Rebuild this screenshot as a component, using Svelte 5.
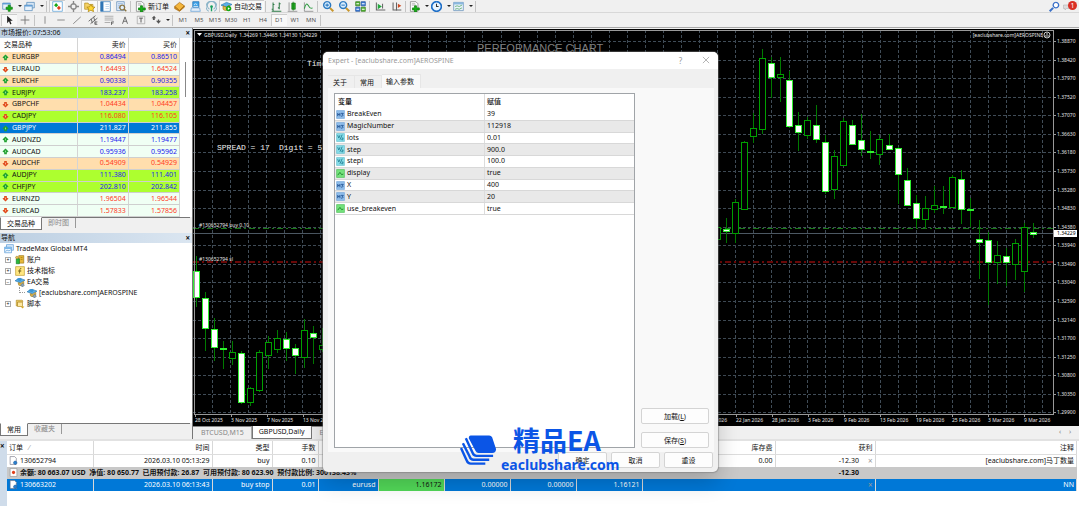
<script>
	// every icon is a list of shapes on a 16x16 grid: [path, fill, stroke, stroke width]
	const icons = {
		newchart: [
			["M1 3h11v9H1z", "#e8f2fb", "#4f86b8", 1],
			["M1 3h11v2H1z", "#5b9bd5"],
			["M9 6h3v3h3v3h-3v3H9v-3H6V9h3z", "#16b016", "#0b7a0b", 1],
		],
		profiles: [
			["M4 2h11v8H4z", "#d6e6f5", "#4f86b8", 1],
			["M1 6h11v8H1z", "#e8f2fb", "#4f86b8", 1],
			["M1 6h11v2H1z", "#5b9bd5"],
		],
		market: [
			["M1 1h14v14H1z", "#fff", "#4f9bd5", 1],
			["M3 6l3-3 3 3-3 3z", "#18a818"],
			["M7 10l3-3 3 3-3 3z", "#e0401c"],
		],
		target: [
			["M8 4a4 4 0 1 0 .1 0", "none", "#888", 2],
			["M8 0v5M8 11v5M0 8h5M11 8h5", "none", "#888", 2],
		],
		folder: [
			["M1 3h5l1 2h6v7H1z", "#f6d266", "#b08a1c", 1],
			["M10 5l2 3.500 4 .5-3 2.500 1 4-4-2-4 2 1-4-3-2.500 4-.5z", "#ffd633", "#a8800c", 1],
		],
		navigator: [
			["M1 1h14v14H1z", "#fff", "#2f75b5", 1],
			["M1 1h4v14H1z", "#2f75b5"],
			["M8 5h5M8 8h5M8 11h5", "none", "#a8c6e4", 1],
		],
		tester: [
			["M1 1h11v13H1z", "#e4eefb", "#5b88b5", 1],
			["M3 4h7M3 7h4M3 10h3", "none", "#6a9bd0", 1],
			["M9 6a3.500 3.500 0 1 0 .1 0M12 12l3 3", "#dff0ff", "#8a7340", 2],
		],
		order: [
			["M2 1h8l3 3v11H2z", "#fff", "#777", 1],
			["M4 4h5M4 6h6", "none", "#999", 1],
			["M8 7h3v3h4v3h-4v3H8v-3H5v-3h3z", "#16b016", "#0b7a0b", 1],
		],
		book: [
			["M1 8l7-6 7 5-7 7z", "#f4b63c", "#a4660c", 1],
			["M1 8v3l7 4 7-6V7l-7 7z", "#d99520", "#a4660c", 1],
		],
		terminal: [
			["M4 1h9v8H4z", "#3ea2e8", "#1e6db0", 1],
			["M2 10h12l1 5H1z", "#e4eef8", "#5b9bd5", 1],
			["M6 6a2 2 0 1 1 4 0M5 8h7", "none", "#fff", 1],
		],
		signal: [
			["M8 6a2 2 0 1 0 .1 0", "#18a060"],
			["M5 12a6 6 0 1 1 6 0M4 15a8 8 0 1 1 8 0", "none", "#8ab4c8", 1.500],
			["M8 8v7", "none", "#18a060", 2],
		],
		expert: [
			["M0 6l8-4 8 3-8 4z", "#5cb0e8", "#2878b0", 1],
			["M5 9l4 1 5-3v4l-4 3-4-1z", "#e4b84a", "#98781c", 1],
			["M2 4c3-3 7-3 9 0l-3 3z", "#3a94d4"],
			["M12 10l3 3-3 3-3-3z", "#8aa4b8", "#5a7488", 1],
		],
		autotrade: [
			["M0 6l8-4 8 3-8 4z", "#5cb0e8", "#2878b0", 1],
			["M3 7v5c3 3 7 2 9-1V6L8 9z", "#e4b84a", "#98781c", 1],
			["M11 7a4 4 0 1 0 .1 0", "#18a818"],
			["M10 9l3 2-3 2z", "#fff"],
		],
		bars: [["M3 2v12M1 12h2M3 5h2M12 2v10M10 10h2M12 4h2M1 15h14", "none", "#2d7a46", 1.500]],
		candles: [
			["M3 2v12M1 15h14", "none", "#777", 1],
			["M7 3h5v9H7z", "#22b022", "#107010", 1],
			["M9 1v13", "none", "#107010", 1],
		],
		line: [
			["M2 2v13h13", "none", "#777", 1],
			["M2 11c2-8 4-8 6-4s4 4 6 3", "none", "#2a9a3c", 1.500],
		],
		zoomin: [
			["M10 10l5 5", "none", "#c8962c", 3],
			["M6 1a5 5 0 1 0 .1 0", "#d8eeff", "#2a78c0", 2],
			["M6 3.500v5M3.500 6h5", "none", "#2a78c0", 1.500],
		],
		zoomout: [
			["M10 10l5 5", "none", "#c8962c", 3],
			["M6 1a5 5 0 1 0 .1 0", "#d8eeff", "#2a78c0", 2],
			["M3.500 6h5", "none", "#2a78c0", 1.500],
		],
		tiles: [
			["M1 1h6v6H1zM9 9h6v6H9z", "#52b030", "#2f7a18", 1],
			["M9 1h6v6H9zM1 9h6v6H1z", "#3c7cd8", "#1f4f98", 1],
			["M2 4h4M10 4h4M2 12h4M10 12h4", "none", "#fff", 1.500],
		],
		scroll: [
			["M2 2v11h13M11 4v7", "none", "#666", 1.500],
			["M4 4l6 4-6 4z", "#22a83c"],
		],
		shift: [
			["M3 2v11h12M8 2v12", "none", "#666", 1.500],
			["M15 7l-5-3v6z", "#cc4a22"],
		],
		clock: [
			["M8 1a7 7 0 1 0 .1 0", "#e8f4ff", "#2070c8", 2.500],
			["M8 4v4h3", "none", "#333", 1.500],
		],
		template: [
			["M1 2h14v12H1z", "#eaf4fb", "#5b88b5", 1],
			["M1 2h14v3H1z", "#8ab8de"],
			["M3 8l3-1 3 1 4-2M3 12l3-1 3 1 4-2", "none", "#3c9a50", 1],
		],
		cursor: [["M5 1v12l3-3 2 5 2-1-2-5h4z", "#222"]],
		cross: [["M8 1v14M1 8h14", "none", "#777", 1.500]],
		vline: [["M8 2v12", "none", "#888", 1.500]],
		hline: [["M2 8h12", "none", "#888", 1.500]],
		trend: [["M2 14L14 3", "none", "#888", 1.500]],
		channel: [
			["M1 10L12 1M4 14l11-9M5 6l2 7M9 3l2 7", "none", "#666", 1.500],
			["M11 11h4M11 13h3M11 15h4M11 11v4", "none", "#333", 1],
		],
		fibo: [
			["M1 2h14M1 5h14M1 8h14M1 12h9", "none", "#888", 1],
			["M12 11h4M12 13h3M12 11v5", "none", "#333", 1],
		],
		text: [["M4 14L8 3l4 11M5 10h6", "none", "#666", 1.500]],
		label: [
			["M2 2h12v12H2z", "none", "#999", 1],
			["M5 5h6M8 5v7", "none", "#555", 1.500],
		],
		arrows: [["M1 5l4-4 3 4H6v3H3V5zM8 9h3V7h2v2h3l-4 5z", "#555"]],
		search: [
			["M6 10l-5 5", "none", "#3a70c8", 3],
			["M10 2a4 4 0 1 0 .1 0", "#fff", "#3a70c8", 2],
		],
		up: [["M8 1l7 7-4 2v4H5v-4L1 8z", "#20a030"], ["M8 6v4", "none", "#9fe6a4", 2]],
		down: [["M8 15l7-7-4-2V2H5v4L1 8z", "#e04a1c"], ["M8 6v4", "none", "#ffc0a0", 2]],
		server: [
			["M4 1h11v9H4z", "#d8eafb", "#4a90d0", 1],
			["M1 5h11v9H1z", "#eef7ff", "#4a90d0", 1],
			["M1 5h11v3H1z", "#7db8ea"],
			["M2 12l3-2 3 1 3-2", "none", "#4a90d0", 1],
		],
		accounts: [
			["M6 1h8v12H6z", "#e6b83a", "#987010", 1],
			["M2 6h5v8H2z", "#2ab83c", "#107820", 1],
			["M3 2a2 2 0 1 0 .1 0M9 4h3M9 7h3", "#f0cc60", "#987010", 1],
		],
		indicator: [
			["M1 1h14v14H1z", "#ffe680", "#b89420", 1],
			["M10 4c-3-1-2 3-3 8M5 8h5", "none", "#6a5510", 1.500],
		],
		script: [
			["M2 2h9c2 0 2 3 0 3H4v6H2z", "#f4d468", "#a8821c", 1],
			["M4 5h8v7H4z", "#ffe9a0", "#a8821c", 1],
			["M9 12h6l-3 3z", "#d8a820"],
		],
		ticket: [
			["M2 1h8l3 3v11H2z", "#fff", "#667", 1],
			["M11 9a3 3 0 1 0 .1 0", "#2a80d0", "#1a5a9a", 1],
		],
		balance: [
			["M2 1h12v14H2z", "#fff", "#888", 1],
			["M8 5a3 3 0 1 0 .1 0", "#e0401c"],
		],
		int: [
			["M1 1h14v14H1z", "#8fbdea", "#6aa0d8", 1],
			["M3 11V6l2 3 2-3v5M9 6h4l-2 2c3 0 2 3-2 3", "none", "#1e4f90", 1.500],
		],
		num: [
			["M1 1h14v14H1z", "#86dce8", "#58bccb", 1],
			["M3 4l2 5 2-5M11 3L7 12M10 9h3l-3 3h3", "none", "#1f7c92", 1.500],
		],
		bool: [
			["M1 1h14v14H1z", "#74e27c", "#44b84e", 1],
			["M3 11l4-5 3 4 3-1", "none", "#147a24", 1.500],
		],
	};

	const toolbar = [
		{ icon: "newchart", caret: true },
		{ icon: "profiles", caret: true },
		{ sep: true },
		{ icon: "market", on: true },
		{ icon: "target" },
		{ icon: "folder", on: true },
		{ icon: "navigator", on: true },
		{ icon: "tester" },
		{ sep: true },
		{ icon: "order", label: "新订单" },
		{ icon: "book" },
		{ icon: "terminal" },
		{ icon: "signal" },
		{ icon: "autotrade", label: "自动交易", on: true },
		{ sep: true },
		{ icon: "bars" },
		{ icon: "candles" },
		{ icon: "line" },
		{ sep: true },
		{ icon: "zoomin" },
		{ icon: "zoomout" },
		{ icon: "tiles" },
		{ sep: true },
		{ icon: "scroll" },
		{ icon: "shift" },
		{ sep: true },
		{ icon: "order", caret: true },
		{ icon: "clock", caret: true },
		{ icon: "template", caret: true },
		{ sep: true },
	];

	const drawing = [
		{ icon: "cursor", on: true },
		{ icon: "cross" },
		{ sep: true },
		{ icon: "vline" },
		{ icon: "hline" },
		{ icon: "trend" },
		{ icon: "channel" },
		{ icon: "fibo" },
		{ icon: "text" },
		{ icon: "label" },
		{ icon: "arrows", caret: true },
		{ sep: true },
	];

	const periods = ["M1", "M5", "M15", "M30", "H1", "H4", "D1", "W1", "MN"];

	// symbol, bid, ask, arrow, row colour
	const quotes = [
		["EURGBP", "0.86494", "0.86510", "up", "peach", "blue"],
		["EURAUD", "1.64493", "1.64524", "down", "mint", "red"],
		["EURCHF", "0.90338", "0.90355", "up", "peach", "blue"],
		["EURJPY", "183.237", "183.258", "up", "lime", "blue"],
		["GBPCHF", "1.04434", "1.04457", "down", "peach", "red"],
		["CADJPY", "116.080", "116.105", "down", "lime", "red"],
		["GBPJPY", "211.827", "211.855", "up", "selected", "white"],
		["AUDNZD", "1.19447", "1.19477", "up", "mint", "blue"],
		["AUDCAD", "0.95936", "0.95962", "up", "mint", "blue"],
		["AUDCHF", "0.54909", "0.54929", "down", "peach", "red"],
		["AUDJPY", "111.380", "111.401", "up", "lime", "blue"],
		["CHFJPY", "202.810", "202.842", "up", "lime", "blue"],
		["EURNZD", "1.96504", "1.96544", "down", "mint", "red"],
		["EURCAD", "1.57833", "1.57856", "down", "mint", "red"],
	];

	const params = [
		["int", "BreakEven", "39"],
		["int", "MagicNumber", "112918"],
		["num", "lots", "0.01"],
		["num", "step", "900.0"],
		["num", "stepi", "100.0"],
		["bool", "display", "true"],
		["int", "X", "400"],
		["int", "Y", "20"],
		["bool", "use_breakeven", "true"],
	];

	// candles: high, body top, body bottom, low, 1 = falling (white body)
	const oldCandles = [
		[227, 242, 268, 278, 1],
		[263, 269, 299, 322, 1],
		[289, 300, 318, 332, 1],
		[312, 319, 320, 340, 1],
		[312, 323, 329, 336, 0],
		[322, 324, 373, 375, 1],
		[358, 359, 373, 377, 0],
		[321, 323, 361, 363, 0],
		[307, 313, 326, 340, 0],
		[301, 309, 320, 324, 0],
		[303, 310, 319, 332, 1],
		[315, 319, 326, 345, 1],
		[290, 301, 328, 339, 0],
		[297, 304, 308, 335, 1],
		[299, 316, 320, 323, 0],
	];
	const newCandles = [
		[190, 198, 210, 212, 0],
		[189, 200, 202, 214, 1],
		[170, 173, 204, 214, 0],
		[112, 113, 180, 181, 0],
		[84, 99, 107, 114, 0],
		[20, 29, 100, 105, 0],
		[28, 34, 48, 69, 1],
		[28, 45, 48, 73, 0],
		[42, 51, 97, 99, 1],
		[83, 96, 103, 122, 1],
		[88, 91, 106, 110, 0],
		[76, 96, 110, 114, 1],
		[106, 113, 162, 165, 1],
		[121, 127, 160, 170, 0],
		[89, 92, 136, 137, 0],
		[91, 96, 115, 116, 1],
		[85, 111, 120, 127, 1],
		[102, 122, 123, 130, 1],
		[106, 110, 125, 136, 0],
		[105, 116, 120, 121, 1],
		[118, 119, 145, 175, 1],
		[139, 151, 176, 177, 1],
		[166, 174, 189, 199, 1],
		[167, 179, 190, 200, 0],
		[157, 176, 180, 184, 0],
		[157, 177, 178, 185, 1],
		[146, 148, 178, 179, 0],
		[141, 150, 180, 195, 1],
		[169, 180, 181, 198, 1],
		[191, 210, 213, 250, 1],
		[203, 211, 233, 276, 1],
		[212, 226, 233, 255, 0],
		[219, 227, 233, 257, 1],
		[210, 214, 235, 251, 0],
		[194, 198, 242, 263, 0],
		[194, 203, 205, 209, 1],
	];
	const prices = [
		"1.38870", "1.38420", "1.37970", "1.37520", "1.37070", "1.36630", "1.36180",
		"1.35730", "1.35280", "1.34830", "1.34380", "1.33940", "1.33490", "1.33040",
		"1.32590", "1.32140", "1.31700", "1.31250", "1.30800", "1.30350", "1.29900",
	];
	const oldDates = ["28 Oct 2025", "3 Nov 2025", "7 Nov 2025", "13 Nov 2025"];
	// counted back from the right edge
	const newDates = [
		"9 Mar 2026", "3 Mar 2026", "25 Feb 2026", "19 Feb 2026", "13 Feb 2026",
		"9 Feb 2026", "3 Feb 2026", "28 Jan 2026", "22 Jan 2026", "16 Jan 2026",
	];
	const gridLines = Array.from({ length: 160 }, (_, i) => Math.round(-37 - i * 18.05));
	const priceY = (i) => Math.round(12 + i * 18.57);
	const oldX = (i) => 3 + i * 9;
	const newX = (i) => Math.round(-46 - (newCandles.length - 1 - i) * 9.03);

	let period = "D1";
</script>

{#snippet icon(name)}
	<svg class="icon" viewBox="0 0 16 16" aria-hidden="true">
		{#each icons[name] as [d, fill, stroke, width]}
			<path {d} {fill} stroke={stroke || "none"} stroke-width={width || 0} />
		{/each}
	</svg>
{/snippet}

{#snippet tools(items)}
	{#each items as item}
		{#if item.sep}
			<span class="sep"></span>
		{:else}
			<button type="button" class="tool" class:on={item.on} class:wide={item.label} class:drop={item.caret} aria-label={item.icon}>
				{@render icon(item.icon)}
				{#if item.label}{item.label}{/if}
				{#if item.caret}<span class="caret"></span>{/if}
			</button>
		{/if}
	{/each}
{/snippet}

{#snippet candle(x, [high, top, bottom, low, falling])}
	<path class="wick" d="M{x + 0.5} {high}V{top}M{x + 0.5} {bottom}V{low}" />
	<rect class="body" class:falling x={x - 2.5} y={top + 0.5} width="6" height={bottom - top} />
{/snippet}

<div class="desktop">
	<header>
		<div class="bar top">
			{@render tools(toolbar)}
			<span class="space"></span>
			<button type="button" class="tool" aria-label="search">{@render icon("search")}</button>
			<button type="button" class="tool bell" aria-label="alerts">
				<svg class="icon" viewBox="0 0 16 16"><path d="M1 5h11v7H7l-3 3v-3H1z" fill="#ddd" stroke="#aaa" /></svg>
				<span class="badge">1</span>
			</button>
		</div>
		<div class="bar">
			{@render tools(drawing)}
			{#each periods as p}
				<button type="button" class="tool period" class:on={p === period} on:click={() => (period = p)}>{p}</button>
			{/each}
			<span class="sep"></span>
		</div>
	</header>

	<main>
		<aside>
			<section class="market">
				<div class="title">市场报价: 07:53:06<button type="button" class="close" aria-label="close">×</button></div>
				<div class="scroller">
					<table class="quotes">
						<thead>
							<tr><th>交易品种</th><th>卖价</th><th>买价</th></tr>
						</thead>
						<tbody>
							{#each quotes as [symbol, bid, ask, dir, row, ink]}
								<tr class={row}>
									<td><span class="cell">{@render icon(dir)}{symbol}</span></td>
									<td class={ink}>{bid}</td>
									<td class={ink}>{ask}</td>
								</tr>
							{/each}
						</tbody>
					</table>
					<div class="thumb"></div>
				</div>
				<div class="tabs">
					<button type="button" class="tab active">交易品种</button>
					<button type="button" class="tab">即时图</button>
				</div>
			</section>

			<section class="navigator">
				<div class="title">导航<button type="button" class="close" aria-label="close">×</button></div>
				<ul class="tree">
					<li class="root">{@render icon("server")}TradeMax Global MT4</li>
					<li><span class="box">+</span>{@render icon("accounts")}账户</li>
					<li><span class="box">+</span>{@render icon("indicator")}技术指标</li>
					<li><span class="box">−</span>{@render icon("expert")}EA交易</li>
					<li class="leaf"><span class="branch"></span>{@render icon("expert")}[eaclubshare.com]AEROSPINE</li>
					<li><span class="box">+</span>{@render icon("script")}脚本</li>
				</ul>
				<div class="tabs">
					<button type="button" class="tab active">常用</button>
					<button type="button" class="tab">收藏夹</button>
				</div>
			</section>
		</aside>

		<section class="chart">
			<svg class="plot" width="100%" height="397">
				<svg x="100%" overflow="visible">
					{#each gridLines as x}
						<line class="grid" x1={x + 0.5} x2={x + 0.5} y1="1" y2="385" />
					{/each}
				</svg>
				{#each prices as _, i}
					<line class="grid" x1="0" x2="100%" y1={priceY(i) + 0.5} y2={priceY(i) + 0.5} />
				{/each}
				<line class="order" x1="0" x2="100%" y1="199.5" y2="199.5" />
				<line class="bid" x1="0" x2="100%" y1="204.500" y2="204.500" />
				<line class="stop" x1="0" x2="100%" y1="233" y2="233" />
				{#each oldCandles as c, i}
					{@render candle(oldX(i), c)}
				{/each}
				<path class="axis" d="M1.500 1V385" />
				<line class="axis" x1="1" x2="100%" y1="1.500" y2="1.500" />
				<line class="axis" x1="1" x2="100%" y1="385.500" y2="385.500" />
				{#each oldDates as date, i}
					<path class="axis" d="M{2.5 + i * 36} 385v3" />
					<text x={2 + i * 36} y="393">{date}</text>
				{/each}
				<path d="M4 4h5l-2.500 3z" fill="#fff" />
				<text x="11" y="8">GBPUSD,Daily&nbsp; 1.34269 1.34465 1.34130 1.34229</text>
				<text x="6" y="198">#130652794 buy 0.10</text>
				<text x="6" y="232">#130652794 sl</text>
				<text class="heading" x="284" y="23">PERFORMANCE CHART</text>
				<text class="mono" x="114" y="37">Time</text>
				<text class="mono" x="24" y="121">SPREAD = 17</text>
				<text class="mono" x="86" y="121">Digit = 5</text>
				<svg x="100%" overflow="visible">
					{#each newCandles as c, i}
						{@render candle(newX(i), c)}
					{/each}
					<rect x="-26" y="0" width="27" height="397" fill="#000" />
					<path class="axis" d="M-25.500 1V386" />
					{#each prices as price, i}
						<path class="axis" d="M-26 {priceY(i) + 0.5}h3" />
						<text x="-22" y={priceY(i) + 2}>{price}</text>
					{/each}
					<rect x="-25" y="201" width="23" height="7" fill="#fff" />
					<text class="now" x="-22" y="206">1.34229</text>
					{#each newDates as date, i}
						<path class="axis" d="M{-54.500 - i * 36} 385v3" />
						<text x={-55 - i * 36} y="393">{date}</text>
					{/each}
					<text x="-36" y="8" text-anchor="end">[eaclubshare.com]AEROSPINE</text>
					<circle cx="-32" cy="6" r="3" fill="none" stroke="#ccc" />
					<path d="M-34 7h4M-33 5h1M-32 5h1" stroke="#ccc" />
				</svg>
			</svg>
			<div class="charttabs">
				<button type="button" class="ctab">BTCUSD,M15</button>
				<button type="button" class="ctab active">GBPUSD,Daily</button>
				<button type="button" class="ctab">EURUSD</button>
				<span class="space"></span>
				<span class="arrow">‹</span>
				<span class="arrow">›</span>
			</div>
		</section>
	</main>

	<footer>
		<div class="side"><button type="button" class="close" aria-label="close">×</button></div>
		<table class="orders">
			<colgroup>
				<col class="c86" /><col class="c119" /><col class="c60" /><col class="c46" />
				<col class="c60" /><col class="c66" /><col class="c66" /><col class="c66" /><col class="c66" />
				<col class="c133" /><col class="c86" /><col class="c14" /><col />
			</colgroup>
			<thead>
				<tr>
					<th class="left">订单 <span class="sort">⁄</span></th>
					<th>时间</th><th>类型</th><th>手数</th>
					<th></th><th></th><th></th><th></th><th></th>
					<th>库存费</th><th colspan="2">获利</th><th>注释</th>
				</tr>
			</thead>
			<tbody>
				<tr>
					<td class="left"><span class="cell">{@render icon("ticket")}130652794</span></td>
					<td>2026.03.10 05:13:29</td><td>buy</td><td>0.10</td>
					<td></td><td></td><td></td><td></td><td></td>
					<td>0.00</td><td class="open">-12.30</td><td class="x">×</td><td>[eaclubshare.com]马丁数量</td>
				</tr>
				<tr class="sum">
					<td class="left" colspan="10">
						<span class="cell">{@render icon("balance")}余额: 80 663.07 USD&nbsp; 净值: 80 650.77&nbsp; 已用预付款: 26.87&nbsp; 可用预付款: 80 623.90&nbsp; 预付款比例: 300138.43%</span>
					</td>
					<td>-12.30</td><td></td><td></td>
				</tr>
				<tr class="picked">
					<td class="left"><span class="cell">{@render icon("ticket")}130663202</span></td>
					<td>2026.03.10 06:13:43</td><td>buy stop</td><td>0.01</td>
					<td>eurusd</td><td class="hit">1.16172</td><td>0.00000</td><td>0.00000</td><td>1.16121</td>
					<td class="open"></td><td class="open"></td><td class="x">×</td><td>NN</td>
				</tr>
			</tbody>
		</table>
	</footer>

	<div class="dialog" role="dialog" aria-label="Expert">
		<div class="caption">
			<span class="space">Expert - [eaclubshare.com]AEROSPINE</span>
			<button type="button" class="cap" aria-label="help">?</button>
			<button type="button" class="cap" aria-label="close">
				<svg class="icon" viewBox="0 0 16 16"><path d="M3 3l10 10M13 3L3 13" fill="none" stroke="#888" /></svg>
			</button>
		</div>
		<div class="dtabs">
			<button type="button" class="dtab">关于</button>
			<button type="button" class="dtab">常用</button>
			<button type="button" class="dtab active">输入参数</button>
		</div>
		<div class="page">
			<div class="list">
				<table class="params">
					<thead>
						<tr><th>变量</th><th>赋值</th></tr>
					</thead>
					<tbody>
						{#each params as [type, name, value]}
							<tr><td><span class="cell">{@render icon(type)}{name}</span></td><td>{value}</td></tr>
						{/each}
					</tbody>
				</table>
			</div>
			<div class="actions">
				<button type="button" class="btn">加载(<u>L</u>)</button>
				<button type="button" class="btn">保存(<u>S</u>)</button>
			</div>
		</div>
		<div class="buttons">
			<button type="button" class="btn">确定</button>
			<button type="button" class="btn">取消</button>
			<button type="button" class="btn">重设</button>
		</div>
	</div>

	<div class="brand">
		<svg viewBox="0 0 38 32" aria-hidden="true">
			<path d="M11 1h19q2 0 3 2l4 12q0 4-4 4H19q-2 0-3-2L9 4q0-3 2-3z" fill="#0b55e6" />
			<path d="M6 4l7 15q1 3 4 3h17M3 9l7 14q1 3 4 3h16M1 14l6 13q1 3 4 3h15" fill="none" stroke="#0b55e6" stroke-width="2.500" />
		</svg>
		<div>
			<strong>精品EA</strong>
			<span>eaclubshare.com</span>
		</div>
	</div>
</div>

<style>
	:global(body) {
		margin: 0;
		background: #fff;
	}
	.desktop {
		position: relative;
		display: flex;
		flex-direction: column;
		min-height: 100vh;
		overflow: hidden;
		font-family: "Noto Sans", "Noto Sans CJK SC", sans-serif;
		font-size: 7px;
		line-height: 11px;
		color: #111;
		background: #f0f0f0;
	}
	button {
		margin: 0;
		padding: 0;
		border: 0;
		background: none;
		font: inherit;
		color: inherit;
	}
	table {
		border-collapse: collapse;
		border-spacing: 0;
	}
	th, td {
		padding: 0;
		font-weight: normal;
		white-space: nowrap;
	}
	.icon {
		flex: none;
		width: 10px;
		height: 10px;
	}
	.cell {
		display: flex;
		align-items: center;
		gap: 2px;
	}
	.space {
		flex: 1;
	}

	/* toolbars */
	.bar {
		display: flex;
		align-items: center;
		height: 14px;
		padding-left: 1px;
		box-sizing: border-box;
	}
	.top {
		height: 13px;
		border-bottom: 1px solid #d8d8d8;
	}
	.tool {
		display: flex;
		align-items: center;
		justify-content: center;
		gap: 1px;
		min-width: 16px;
		height: 12px;
		box-sizing: border-box;
		white-space: nowrap;
	}
	.tool.on {
		background: #f8f8f8;
		box-shadow: inset 1px 1px #ccc;
	}
	.tool.wide {
		gap: 2px;
		padding: 0 2px;
	}
	.tool.drop {
		min-width: 22px;
	}
	.top .icon {
		width: 11px;
		height: 11px;
	}
	.caret {
		margin-left: 4px;
		border: 2px solid transparent;
		border-top-color: #222;
		border-bottom: 0;
	}
	.sep {
		width: 1px;
		height: 11px;
		margin: 0 2px 0 1px;
		background: #c4c4c4;
	}
	.period {
		font-size: 6px;
		color: #555;
	}
	.bell {
		margin-right: 1px;
		gap: 0;
	}
	.bell .icon {
		width: 8px;
	}
	.badge {
		width: 9px;
		margin: 0 0 2px -3px;
		border-radius: 5px;
		background: #d93025;
		color: #fff;
		font-size: 7px;
		line-height: 9px;
		text-align: center;
	}

	/* left side */
	main {
		display: grid;
		grid-template-columns: 192px 1fr;
		flex: none;
		border-top: 1px solid #a8a8a8;
	}
	aside {
		display: flex;
		flex-direction: column;
		gap: 3px;
	}
	.title {
		display: flex;
		justify-content: space-between;
		height: 10px;
		padding: 0 2px 0 1px;
		line-height: 10px;
		background: linear-gradient(90deg, #bccfe2, #dbe6f1);
	}
	.close {
		font-size: 8px;
		font-weight: bold;
		line-height: 8px;
	}
	.scroller {
		display: flex;
		background: #fff;
	}
	.thumb {
		width: 1px;
		height: 35px;
		margin: 24px 0 0 5px;
		background: #888;
	}
	.quotes {
		width: 180px;
		height: 179px;
		table-layout: fixed;
	}
	.quotes th {
		height: 14px;
		text-align: right;
	}
	.quotes th:first-child {
		width: 77px;
		padding-left: 4px;
		box-sizing: border-box;
		text-align: left;
	}
	.quotes th, .quotes td {
		padding-right: 2px;
		border-right: 1px solid #d4d4d4;
		line-height: 10px;
	}
	.quotes td {
		border-bottom: 1px solid #cfcfcf;
		text-align: right;
	}
	.quotes td:first-child {
		padding-left: 2px;
	}
	.quotes .icon {
		width: 7px;
		height: 7px;
	}
	.quotes .cell {
		gap: 3px;
	}
	.peach { background: #ffdead; }
	.mint { background: #f0fff4; }
	.lime { background: #adff2f; }
	.selected {
		background: #0078d7;
		color: #fff;
	}
	.blue { color: #2222ee; }
	.red { color: #ff3b1f; }
	.white { color: #fff; }
	.tabs {
		display: flex;
		height: 12px;
		margin-right: 2px;
		border-top: 1px solid #777;
	}
	.tab {
		padding: 0 6px;
		line-height: 10px;
		color: #888;
	}
	.tab.active {
		margin-top: -1px;
		border: 1px solid #777;
		border-top-color: #fff;
		background: #fff;
		color: #111;
	}
	.tab:last-child {
		border-right: 1px solid #999;
		margin-bottom: 2px;
	}
	.navigator {
		display: flex;
		flex: 1;
		flex-direction: column;
	}
	.navigator .tabs {
		margin-bottom: 3px;
	}
	.tree {
		flex: 1;
		margin: 0;
		padding: 0 0 0 4px;
		list-style: none;
		background: #fff;
	}
	.tree li {
		display: flex;
		align-items: center;
		gap: 2px;
		height: 11px;
		padding-left: 1px;
	}
	.tree li.root {
		padding-left: 0;
	}
	.box {
		width: 4px;
		height: 4px;
		margin-right: 2px;
		border: 1px solid #aaa;
		font-size: 5px;
		line-height: 4px;
		text-align: center;
	}
	.tree li.leaf {
		padding-left: 15px;
	}
	.branch {
		width: 5px;
		height: 5px;
		margin-bottom: 5px;
		border: 1px dotted #999;
		border-width: 0 0 1px 1px;
	}

	/* chart */
	.chart {
		min-width: 0;
		padding-top: 1px;
		border-left: 1px solid #777;
	}
	.plot {
		display: block;
		background: #000;
	}
	.plot text {
		fill: #e4e4e4;
		font-size: 5px;
	}
	.plot .now {
		fill: #000;
	}
	.plot .heading {
		fill: #808080;
		font-family: "Liberation Sans", sans-serif;
		font-size: 11px;
	}
	.plot .mono {
		fill: #f0f0f0;
		font-family: "Liberation Mono", monospace;
		font-size: 8px;
	}
	.grid {
		stroke: #404c57;
		stroke-dasharray: 3 2;
	}
	.axis {
		stroke: #999;
		fill: none;
	}
	.order {
		stroke: #1a7a1a;
		stroke-dasharray: 6 3 2 3;
	}
	.bid {
		stroke: #4c5863;
	}
	.stop {
		stroke: #6a0808;
		stroke-width: 2;
		stroke-dasharray: 6 3 2 3;
	}
	.wick {
		stroke: #007a00;
	}
	.body {
		fill: #000;
		stroke: #00a000;
	}
	.body.falling {
		fill: #fff;
		stroke: #30f030;
	}
	.charttabs {
		display: flex;
		height: 13px;
		line-height: 12px;
		color: #888;
	}
	.ctab {
		padding: 0 7px 0 8px;
		border-right: 1px solid #aaa;
		border-top: 1px solid #888;
	}
	.ctab.active {
		border: 1px solid #777;
		border-top: 0;
		padding: 0 6px;
		background: #fff;
		color: #111;
	}
	.arrow {
		width: 10px;
	}

	/* terminal */
	footer {
		display: flex;
		flex: 1;
		border-top: 2px solid #e2e2e2;
		background: #fff;
	}
	.side {
		width: 7px;
		background: #cfdcea;
	}
	.orders {
		flex: 1;
		align-self: flex-start;
		table-layout: fixed;
		width: 100%;
		margin-right: 2px;
	}
	.orders th {
		height: 13px;
		border-bottom: 1px solid #ddd;
	}
	.orders tbody tr {
		height: 12px;
	}
	.orders th, .orders td {
		padding-right: 2px;
		border-right: 1px solid #d8d8d8;
		text-align: right;
	}
	.orders th.left, .orders td.left {
		padding-left: 2px;
		text-align: left;
	}
	.orders th:nth-child(n+5):nth-child(-n+9) {
		border-right: 0;
	}
	.orders .open {
		border-right: 0;
	}
	.orders td.x {
		color: #999;
		font-size: 8px;
	}
	.orders .icon {
		width: 9px;
		height: 9px;
	}
	.orders .cell {
		gap: 2px;
	}
	.orders tr.sum {
		background: #c8c8c8;
	}
	.orders .sum td {
		border-right: 0;
		font-weight: bold;
	}
	.orders tr.picked {
		background: #0078d7;
		color: #fff;
	}
	.orders .hit {
		background: #52d858;
		color: #111;
	}
	.sort {
		margin-left: 4px;
		color: #999;
	}
	.c14 { width: 14px; }
	.c46 { width: 46px; }
	.c60 { width: 60px; }
	.c66 { width: 66px; }
	.c86 { width: 86px; }
	.c119 { width: 119px; }
	.c133 { width: 133px; }

	/* expert window */
	.dialog {
		position: absolute;
		top: 52px;
		left: 323px;
		display: flex;
		flex-direction: column;
		width: 395px;
		height: 420px;
		border-radius: 5px;
		overflow: hidden;
		background: #f0f0f0;
		box-shadow: 0 0 1px 1px rgba(120, 120, 120, 0.5), 0 10px 22px rgba(0, 0, 0, 0.2);
	}
	.caption {
		display: flex;
		align-items: center;
		height: 17px;
		padding-left: 5px;
		background: #fff;
		color: #999;
	}
	.cap {
		width: 25px;
		height: 16px;
		font-size: 8px;
	}
	.dtabs {
		display: flex;
		align-items: flex-end;
		height: 19px;
		padding-left: 5px;
	}
	.dtab {
		height: 13px;
		padding: 0 6px 0 4px;
		border: 1px solid #e6e6e6;
		border-width: 1px 1px 0 0;
		min-width: 27px;
	}
	.dtab.active {
		height: 14px;
		background: #f9f9f9;
	}
	.page {
		display: flex;
		flex: 1;
		gap: 6px;
		margin: 0 4px 0 5px;
		padding: 5px 5px 4px 6px;
		background: #f9f9f9;
	}
	.list {
		flex: 1;
		border: 1px solid #a0a4a8;
		background: #fff;
	}
	.params {
		width: 100%;
		height: 121px;
		table-layout: fixed;
	}
	.params th {
		height: 15px;
		padding-left: 3px;
		font-weight: 500;
		text-align: left;
	}
	.params th, .params td {
		border-right: 1px solid #dcdcdc;
	}
	.params td {
		border-bottom: 1px solid #d8d8d8;
		line-height: 10px;
	}
	.params td:last-child, .params th:last-child {
		padding-left: 2px;
		border-right: 0;
	}
	.params tbody tr:nth-child(even) {
		background: #e9e9e9;
	}
	.params td:first-child {
		padding-left: 1px;
	}
	.params .icon {
		width: 9px;
		height: 9px;
	}
	.actions {
		display: flex;
		flex-direction: column;
		justify-content: flex-end;
		gap: 8px;
		width: 68px;
	}
	.btn {
		height: 16px;
		border: 1px solid #d4d4d4;
		border-radius: 2px;
		background: #fdfdfd;
	}
	.buttons {
		display: flex;
		justify-content: flex-end;
		gap: 4px;
		padding: 0 5px 4px 0;
	}
	.buttons .btn {
		width: 49px;
	}

	/* site mark over everything */
	.brand {
		position: absolute;
		top: 427px;
		left: 460px;
		display: flex;
		align-items: center;
		gap: 4px;
		color: #0b55e6;
	}
	.brand svg {
		width: 37px;
		height: 32px;
	}
	.brand div {
		display: flex;
		flex-direction: column;
		gap: 4px;
	}
	.brand strong {
		padding-left: 12px;
		font-family: "Noto Sans CJK SC", sans-serif;
		font-size: 27px;
		line-height: 26px;
	}
	.brand span {
		font-size: 14px;
		font-weight: bold;
		line-height: 15px;
	}
</style>
